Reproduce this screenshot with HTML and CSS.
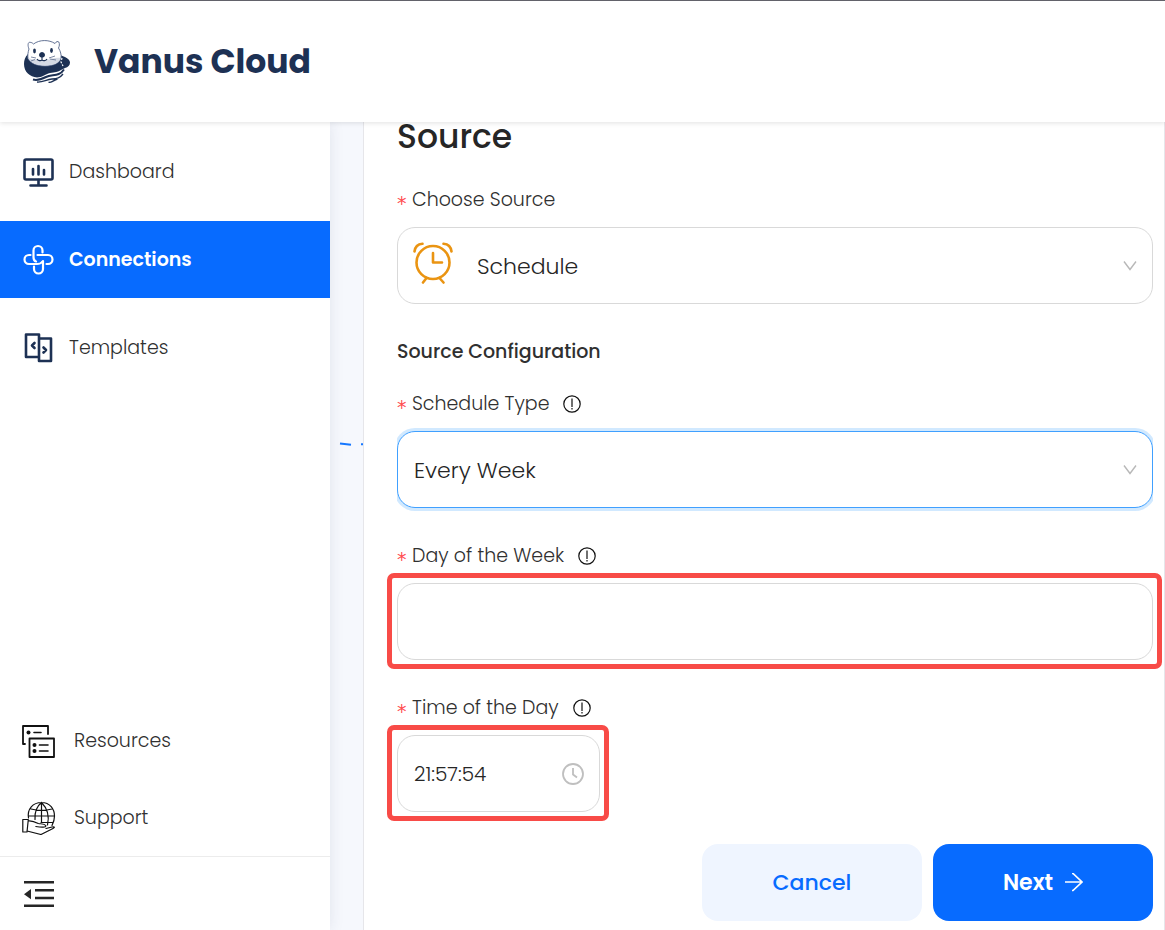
FILE: index.html
```
<!DOCTYPE html>
<html lang="en">
<head>
<meta charset="utf-8">
<meta name="viewport" content="width=device-width, initial-scale=1">
<title>Vanus Cloud</title>
<link rel="stylesheet" href="styles.css">
</head>
<body>
<div class="app">
  <header class="header">
    <svg class="logo" viewBox="0 0 46 43" width="46" height="43" aria-hidden="true">
      <path fill="#1d3154" d="M4 14C1 17 0 20 0 24c0 8 6 13 13 13.500 5 0 8-3 13-4.500 5-1 8-1 11-3l4-2c3-1 5-2.500 5-5.500 0-2-2-4-5-5.500l-5-2Z"/>
      <path fill="#fff" stroke="#55658a" stroke-width=".9" d="M5 9C3.500 5.500 4 2.300 5.500 2.300c2 0 3 .7 4 1.700C15.500-.5 25-.5 31 3.500c1-2 3-2.500 3.800-1.500 1 2 .6 4-.3 6 2 3 3 7 2.500 10C36 23 29 26 21 26S6 23 4 18.500c-.5-3 0-6.500 1-9.500Z"/>
      <path fill="#d5dae4" d="M4.500 18c3 2 9 1 13.500 2 5 1 12-3 18.500-2C36 23 29 25.500 21 25.500S6 23 4.500 18Z"/>
      <ellipse cx="10.500" cy="11" rx="1.400" ry="2.400" fill="#1d3154"/>
      <ellipse cx="27.500" cy="10.500" rx="1.400" ry="2.400" fill="#1d3154"/>
      <path fill="#1d3154" d="M15 15c0-2 2-3 3-3s3 1 3 3-2 2.500-3 2.500-3-.5-3-2.500Z"/>
      <path fill="none" stroke="#1d3154" stroke-width="1.100" d="M18 17v3m-5-1c1 2 4 2 5 1 1 1 4 1 5-1"/>
      <path fill="none" stroke="#5c6b8b" stroke-width=".8" d="M7 17l5 1m-5 3 4-1.500M31 16l-6 2m7 2-6-1"/>
      <path fill="none" stroke="#fff" stroke-width="1.200" stroke-dasharray="2 1.500" d="m38 18-1 4 2 4"/>
      <path fill="none" stroke="#1d3154" stroke-width="2" d="M9 39.500c5 1.500 9-.5 13-2.500 6-3 13 0 18-7.500"/>
      <path fill="none" stroke="#1d3154" stroke-width="1.300" d="M13 42c6 .5 9-2.500 15-3 5-.5 8-1 11-5M24.500 42.500c4 0 5-2.500 9-3.500"/>
    </svg>
    <h1 class="brand">Vanus Cloud</h1>
  </header>
  <div class="body">
    <aside class="sidebar">
      <nav class="nav">
        <a class="nav-item" href="#">
          <svg viewBox="0 0 32 32" width="32" height="32" fill="none" stroke="#1d3154" stroke-linecap="round" aria-hidden="true">
            <rect x="1.500" y="3.500" width="28" height="20" rx="1.500" stroke-width="2.600"/>
            <path stroke-width="2.600" d="M15.500 24v5M7.500 29.500h16M10 13v5.500M15.500 10v8.500M21 14v4.500"/>
          </svg>
          <span>Dashboard</span>
        </a>
        <a class="nav-item nav-item-active" href="#" aria-current="page">
          <svg viewBox="0 0 32 32" width="32" height="32" fill="none" stroke="#fff" stroke-width="2.200" stroke-linecap="round" stroke-linejoin="round" aria-hidden="true">
            <path d="M19.500 8.500V6.500a4.500 4.500 0 0 0-9 0V13c0 3 .5 4 2.500 4.500"/>
            <path d="M7.500 11H6a4.500 4.500 0 0 0 0 9h8c3 0 4-.5 5-2"/>
            <path d="M11 22.500V25a4.500 4.500 0 0 0 9 0v-8"/>
            <path d="M14.500 11H25a4.500 4.500 0 0 1 0 9h-1.500"/>
          </svg>
          <span>Connections</span>
        </a>
        <a class="nav-item" href="#">
          <svg viewBox="0 0 32 32" width="32" height="32" fill="none" stroke="#1d3154" stroke-width="2.600" stroke-linejoin="round" aria-hidden="true">
            <path d="M16 25h-13V2.500h13V29h12V6.500H16"/>
            <path stroke-linecap="round" d="m11.500 11-2.500 2.500 2.500 2.500M20.500 15.500 23 18l-2.500 2.500"/>
          </svg>
          <span>Templates</span>
        </a>
      </nav>
      <nav class="nav-lower">
        <a class="nav-item" href="#">
          <svg viewBox="0 0 34 34" width="34" height="34" fill="none" stroke="#111" stroke-width="1.800" stroke-linejoin="round" stroke-linecap="round" aria-hidden="true">
            <path d="M3 20H1V2h25v8"/>
            <rect x="7.500" y="14.500" width="24.500" height="18.500"/>
            <path stroke-width="1.600" d="M12 8.500h7M17.500 21h8.500M17.500 27h8.500"/>
            <g fill="#111" stroke="none"><circle cx="6.500" cy="8.500" r="2"/><circle cx="12.500" cy="21" r="2"/><circle cx="12.500" cy="27" r="2"/></g>
          </svg>
          <span>Resources</span>
        </a>
        <a class="nav-item" href="#">
          <svg viewBox="0 0 34 34" width="34" height="34" fill="none" stroke="#111" stroke-width="1.200" stroke-linejoin="round" stroke-linecap="round" aria-hidden="true">
            <path d="M6.500 17C5 8 11 1.500 19.500 1.500S32.500 8 32.500 15c0 4-1 6.500-2.500 9.500M19.500 1.500V21M19.500 1.500c-5 4-7 10-6.500 17M19.500 1.500c6 6 8 14 6 22.500M9 8c6 1.500 15 1.500 21 0M6.500 15h26M19 21.500h12"/>
            <path d="M.8 18.500h5.500L5 31H.8zM6.300 20c4-.5 7 1 10 2.500 3 .5 6 0 7.500 2 .5 2-4 2-10 1M24 27.500l6-1.500c3-.5 3 .5 1 1.500L19 33.500 5 30"/>
          </svg>
          <span>Support</span>
        </a>
      </nav>
      <button class="collapse" type="button" aria-label="Collapse menu">
        <svg viewBox="0 0 30 28" width="30" height="28" aria-hidden="true">
          <path fill="none" stroke="#262626" stroke-width="2.600" d="M0 2.300h30M11 10.300h19M11 18h19M0 25.700h30"/>
          <path fill="#262626" d="M0 14.200 7 9v10.300z"/>
        </svg>
      </button>
    </aside>
    <main class="main">
      <div class="canvas">
        <svg class="edge" viewBox="0 0 24 4" width="24" height="4" aria-hidden="true"><path fill="none" stroke="#1677ff" stroke-width="2" d="m1 1.500 11 1.300m10-.5h2"/></svg>
      </div>
      <form class="panel">
        <h2 class="title">Source</h2>
        <div class="field">
          <div class="label-row"><span class="star">*</span><label for="source">Choose Source</label></div>
          <div class="control">
            <select id="source" class="box box-icon"><option>Schedule</option></select>
            <svg class="alarm" viewBox="0 0 40 42" width="40" height="42" fill="none" stroke="#ea9412" stroke-width="2.600" stroke-linecap="round" stroke-linejoin="round" aria-hidden="true">
              <circle cx="20" cy="20.500" r="16.500"/>
              <path d="M20 11v9.500h9M13.500 36 10 40.500M26.500 36l4 4.500M1.500 9.500C2 5 5 2.200 9.500 1.800M38.500 9.500C38 5 35 2.200 30.500 1.800"/>
            </svg>
            <svg class="chevron" viewBox="0 0 14 10" width="14" height="10" aria-hidden="true"><path d="m1 .5 6 8 6-8"/></svg>
          </div>
        </div>
        <h3 class="subtitle">Source Configuration</h3>
        <div class="field">
          <div class="label-row"><span class="star">*</span><label for="type">Schedule Type</label>
            <svg class="info" viewBox="0 0 18 18" width="18" height="18" aria-hidden="true"><circle cx="9" cy="9" r="8.200"/><path d="M9 3.500v8.500M9 13v1.400"/></svg></div>
          <div class="control">
            <select id="type" class="box box-focus"><option>Every Week</option></select>
            <svg class="chevron" viewBox="0 0 14 10" width="14" height="10" aria-hidden="true"><path d="m1 .5 6 8 6-8"/></svg>
          </div>
        </div>
        <div class="field">
          <div class="label-row"><span class="star">*</span><label for="day">Day of the Week</label>
            <svg class="info" viewBox="0 0 18 18" width="18" height="18" aria-hidden="true"><circle cx="9" cy="9" r="8.200"/><path d="M9 3.500v8.500M9 13v1.400"/></svg></div>
          <div class="control control-marked"><input id="day" class="box" type="text"></div>
        </div>
        <div class="field">
          <div class="label-row"><span class="star">*</span><label for="time">Time of the Day</label>
            <svg class="info" viewBox="0 0 18 18" width="18" height="18" aria-hidden="true"><circle cx="9" cy="9" r="8.200"/><path d="M9 3.500v8.500M9 13v1.400"/></svg></div>
          <div class="control control-time control-marked">
            <input id="time" class="box box-time" type="text" value="21:57:54">
            <svg class="clock" viewBox="0 0 22 22" width="22" height="22" aria-hidden="true"><circle cx="11" cy="11" r="10"/><path d="M11 5v6.500l4 3"/></svg>
          </div>
        </div>
        <div class="actions">
          <button class="btn btn-light" type="button">Cancel</button>
          <button class="btn btn-primary" type="button">Next
            <svg viewBox="0 0 18 20" width="18" height="20" fill="none" stroke="#fff" stroke-width="1.700" aria-hidden="true"><path d="M0 9h17M7 .5h1L17 9l-9 8.500H7"/></svg>
          </button>
        </div>
      </form>
    </main>
  </div>
</div>
</body>
</html>
```
FILE: styles.css
```
* {
  box-sizing: border-box;
}

body {
  margin: 0;
  color: #303030;
  background: #fff;
  font-family: Poppins, Inter, "Open Sans", sans-serif;
  font-size: 19px;
  font-weight: 300;
  line-height: 30px;
}

h1,
h2,
h3 {
  margin: 0;
}

svg {
  flex: none;
}

.app {
  display: flex;
  flex-direction: column;
  min-height: 100vh;
}

.header {
  position: relative;
  z-index: 2;
  display: flex;
  align-items: center;
  gap: 24px;
  padding: 38px 24px 38px;
  border-top: 1px solid #62626a;
  background: #fff;
  box-shadow: 0 1px 5px rgba(0, 0, 0, 0.12);
}

.brand {
  color: #1d3154;
  font-size: 33px;
  font-weight: 700;
  line-height: 45px;
}

.body {
  display: flex;
  flex: 1;
}

.sidebar {
  position: relative;
  z-index: 1;
  display: flex;
  flex-direction: column;
  flex: none;
  width: 330px;
  background: #fff;
  box-shadow: 0 0 14px rgba(40, 50, 90, 0.1);
}

.nav {
  display: flex;
  flex-direction: column;
  gap: 11px;
  padding-top: 11px;
}

.nav-lower {
  margin-top: auto;
}

.nav-item {
  display: flex;
  align-items: center;
  gap: 14px;
  height: 77px;
  padding-left: 23px;
  color: #303030;
  text-decoration: none;
}

.nav-lower .nav-item {
  gap: 18px;
  padding-left: 22px;
}

.nav-item-active {
  color: #fff;
  background: #076bff;
  font-weight: 600;
}

.collapse {
  display: flex;
  align-items: center;
  height: 74px;
  padding: 0 24px;
  border: 0;
  border-top: 1px solid #ececec;
  background: none;
}

.main {
  display: flex;
  flex: 1;
  min-width: 0;
}

.canvas {
  position: relative;
  flex: none;
  width: 33px;
  background: #f6f8fd;
}

.edge {
  position: absolute;
  top: 320px;
  right: 0;
}

.panel {
  display: flex;
  flex: 1;
  flex-direction: column;
  gap: 32px;
  min-width: 0;
  padding: 0 11px 9px 33px;
  border: solid #e6e6ea;
  border-width: 0 1px;
}

.title {
  color: #262626;
  font-size: 33px;
  font-weight: 500;
  line-height: 30px;
}

.subtitle {
  margin-bottom: -12px;
  font-size: 19px;
  font-weight: 500;
  line-height: 32px;
}

.field {
  display: flex;
  flex-direction: column;
  gap: 11px;
}

.label-row {
  display: flex;
  align-items: center;
  line-height: 32px;
}

.star {
  width: 15px;
  height: 26px;
  color: #ff4d4f;
  font-family: "DejaVu Sans", sans-serif;
  font-weight: 400;
}

.info {
  margin-left: 14px;
  fill: none;
  stroke: #111;
  stroke-width: 1.2;
}

.control {
  position: relative;
}

.control-time {
  width: 203px;
}

.control-marked::after {
  position: absolute;
  inset: -10px -9px -9px -10px;
  border: 5px solid #f84b47;
  border-radius: 7px;
  content: "";
  pointer-events: none;
}

.box {
  display: block;
  width: 100%;
  height: 77px;
  padding: 2px 16px 0;
  border: 1px solid #d9d9d9;
  border-radius: 18px;
  outline: 0;
  appearance: none;
  color: #262626;
  background: #fff;
  font: inherit;
  font-size: 22px;
}

.box-icon {
  padding-left: 79px;
}

.box-focus {
  border-color: #40a0ff;
  box-shadow: 0 0 0 3px rgba(24, 144, 255, 0.2);
  clip-path: inset(-3px 0);
}

.box-time {
  padding-top: 0;
  font-size: 20px;
}

.alarm {
  position: absolute;
  top: 15px;
  left: 16px;
}

.chevron {
  position: absolute;
  top: 34px;
  right: 16px;
  fill: none;
  stroke: #b8b8b8;
  stroke-width: 1.4;
}

.clock {
  position: absolute;
  top: 28px;
  right: 16px;
  fill: none;
  stroke: #bfbfbf;
  stroke-width: 1.8;
}

.actions {
  display: flex;
  justify-content: flex-end;
  gap: 11px;
}

.btn {
  display: flex;
  align-items: center;
  justify-content: center;
  gap: 12px;
  width: 220px;
  height: 77px;
  border: 0;
  border-radius: 16px;
  font: inherit;
  font-size: 22px;
  font-weight: 500;
}

.btn-light {
  color: #076bff;
  background: #eff5ff;
}

.btn-primary {
  color: #fff;
  background: #076bff;
  font-weight: 600;
}
```
